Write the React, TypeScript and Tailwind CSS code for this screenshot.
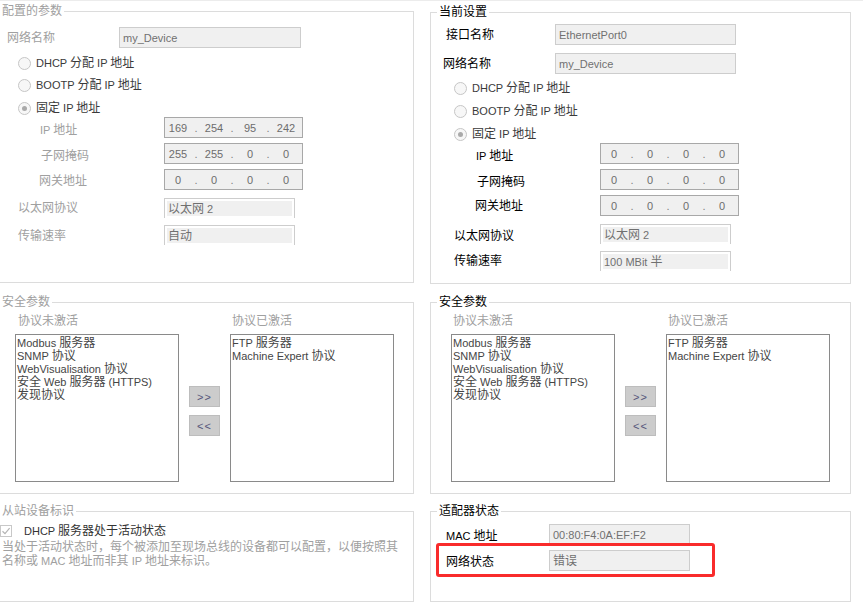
import type { ReactNode } from "react";

const CJK = /([\u2E80-\u9FFF\uFF00-\uFFEF]+)/;

// CJK runs at 12px, latin runs at 11px (like the original Tahoma / SimSun mix)
function Mixed({ s }: { s: string }) {
  return (
    <span>
      {s.split(CJK).map((p, i) =>
        p === "" ? null : CJK.test(p) ? (
          <span key={i} className="text-[12px]">
            {p}
          </span>
        ) : (
          <span key={i} className="text-[11px]">
            {p}
          </span>
        )
      )}
    </span>
  );
}

function Group({
  title,
  dim,
  className,
  children,
}: {
  title: string;
  dim?: boolean;
  className: string;
  children: ReactNode;
}) {
  return (
    <fieldset className={`border border-[#dcdcdc] ${className}`}>
      <legend
        className={`px-[2px] leading-[14px] text-[12px] ${dim ? "ml-0 text-[#a0a0a0]" : "ml-[6px] text-black"}`}
      >
        {title}
      </legend>
      {children}
    </fieldset>
  );
}

function Field({ w, text }: { w: string; text: string }) {
  return (
    <div
      className={`${w} h-[21px] border border-[#cdcdcd] bg-[#f0f0f0] flex items-center pl-[3px] text-[#707070] whitespace-nowrap`}
    >
      <Mixed s={text} />
    </div>
  );
}

function IpField({ parts }: { parts: string[] }) {
  return (
    <div className="w-[139px] h-[21px] border border-[#a8a8a8] bg-[#f0f0f0] flex items-center pl-[1px] text-[11px] text-[#6d6d6d]">
      {parts.map((p, i) => (
        <div key={i} className="flex">
          {i > 0 && <span className="w-[12px] text-center text-[#808080]">.</span>}
          <span className="w-[24px] text-center">{p}</span>
        </div>
      ))}
    </div>
  );
}

function Combo({ text }: { text: string }) {
  return (
    <div className="w-[131px] h-[20px] border-t border-x border-[#cdcdcd] px-[2px] pt-[2px]">
      <div className="h-[15px] bg-[#f0f0f0] flex items-center pl-[1px] text-[#707070] whitespace-nowrap">
        <Mixed s={text} />
      </div>
    </div>
  );
}

function Radio({ label, checked, className }: { label: string; checked?: boolean; className: string }) {
  return (
    <div className={`flex items-center h-[16px] ${className}`}>
      <span className="w-[13px] h-[13px] rounded-full border border-[#c6c6c6] bg-[#f7f7f7] flex items-center justify-center">
        {checked && <span className="w-[5px] h-[5px] rounded-full bg-[#aaaaaa]" />}
      </span>
      <span className="ml-[5px] text-[#3a3a3a] whitespace-nowrap">
        <Mixed s={label} />
      </span>
    </div>
  );
}

function ListBox({ items, className }: { items: string[]; className: string }) {
  return (
    <div
      className={`w-[164px] h-[148px] border border-[#8a8a8a] bg-white pt-[2px] px-[1px] leading-[13px] text-[#454545] ${className}`}
    >
      {items.map((it) => (
        <div key={it} className="whitespace-nowrap">
          <Mixed s={it} />
        </div>
      ))}
    </div>
  );
}

function Btn({ children }: { children: ReactNode }) {
  return (
    <div className="w-[31px] h-[21px] bg-[#cccccc] border border-[#bdbdbd] flex items-center justify-center text-[11px] tracking-[1px] text-[#55557a]">
      {children}
    </div>
  );
}

const inactive = ["Modbus 服务器", "SNMP 协议", "WebVisualisation 协议", "安全 Web 服务器 (HTTPS)", "发现协议"];
const active = ["FTP 服务器", "Machine Expert 协议"];

function Security({ dim }: { dim?: boolean }) {
  return (
    <div className={`flex mt-[6px] ${dim ? "pl-[15px]" : "pl-[20px]"}`}>
      <div className="flex flex-col">
        <span className={`leading-[13px] text-[#a0a0a0] ${dim ? "pl-[3px]" : "pl-[2px]"}`}>协议未激活</span>
        <ListBox className="mt-[6px]" items={inactive} />
      </div>
      <div className="w-[51px] flex flex-col items-center pt-[71px] gap-[8px]">
        <Btn>&gt;&gt;</Btn>
        <Btn>&lt;&lt;</Btn>
      </div>
      <div className="flex flex-col">
        <span className="leading-[13px] text-[#a0a0a0] pl-[2px]">协议已激活</span>
        <ListBox className="mt-[6px]" items={active} />
      </div>
    </div>
  );
}

export default function App() {
  return (
    <div className="w-[863px] h-[610px] overflow-hidden bg-white border-t border-[#ececec] pt-[3px] text-[12px] leading-[14px] font-['Liberation_Sans','Noto_Sans_CJK_SC',sans-serif]">
      {/* top row */}
      <div className="flex gap-4 items-start">
        <Group title="配置的参数" dim className="w-[414px] h-[279px] border-l-0">
          <div className="mt-[9px] flex items-center h-[21px]">
            <span className="w-[119px] pl-[7px] text-[#a0a0a0]">网络名称</span>
            <Field w="w-[182px]" text="my_Device" />
          </div>
          <Radio className="mt-[7px] pl-[18px]" label="DHCP 分配 IP 地址" />
          <Radio className="mt-[6px] pl-[18px]" label="BOOTP 分配 IP 地址" />
          <Radio className="mt-[7px] pl-[18px]" label="固定 IP 地址" checked />
          <div className="mt-[1px] flex items-center h-[21px]">
            <span className="w-[164px] pl-[40px] pt-[5px] text-[#a0a0a0]">
              <Mixed s="IP 地址" />
            </span>
            <IpField parts={["169", "254", "95", "242"]} />
          </div>
          <div className="mt-[5px] flex items-center h-[21px]">
            <span className="w-[164px] pl-[41px] pt-[5px] text-[#a0a0a0]">子网掩码</span>
            <IpField parts={["255", "255", "0", "0"]} />
          </div>
          <div className="mt-[5px] flex items-center h-[21px]">
            <span className="w-[164px] pl-[39px] pt-[3px] text-[#a0a0a0]">网关地址</span>
            <IpField parts={["0", "0", "0", "0"]} />
          </div>
          <div className="mt-[8px] flex items-center h-[20px]">
            <span className="w-[164px] pl-[18px] text-[#a0a0a0]">以太网协议</span>
            <Combo text="以太网 2" />
          </div>
          <div className="mt-[7px] flex items-center h-[20px]">
            <span className="w-[164px] pl-[18px] pt-[2px] text-[#a0a0a0]">传输速率</span>
            <Combo text="自动" />
          </div>
        </Group>

        <Group title="当前设置" className="w-[421px] h-[279px] mt-[1px]">
          <div className="mt-[5px] flex items-center h-[21px]">
            <span className="w-[124px] pl-[15px] text-black">接口名称</span>
            <Field w="w-[181px]" text="EthernetPort0" />
          </div>
          <div className="mt-[8px] flex items-center h-[21px]">
            <span className="w-[124px] pl-[12px] text-black">网络名称</span>
            <Field w="w-[181px]" text="my_Device" />
          </div>
          <Radio className="mt-[6px] pl-[23px]" label="DHCP 分配 IP 地址" />
          <Radio className="mt-[7px] pl-[23px]" label="BOOTP 分配 IP 地址" />
          <Radio className="mt-[7px] pl-[23px]" label="固定 IP 地址" checked />
          <div className="mt-[1px] flex items-center h-[21px]">
            <span className="w-[169px] pl-[45px] pt-[5px] text-black">
              <Mixed s="IP 地址" />
            </span>
            <IpField parts={["0", "0", "0", "0"]} />
          </div>
          <div className="mt-[5px] flex items-center h-[21px]">
            <span className="w-[169px] pl-[46px] pt-[5px] text-black">子网掩码</span>
            <IpField parts={["0", "0", "0", "0"]} />
          </div>
          <div className="mt-[5px] flex items-center h-[21px]">
            <span className="w-[169px] pl-[44px] text-black">网关地址</span>
            <IpField parts={["0", "0", "0", "0"]} />
          </div>
          <div className="mt-[8px] flex items-center h-[20px]">
            <span className="w-[169px] pl-[23px] pt-[3px] text-black">以太网协议</span>
            <Combo text="以太网 2" />
          </div>
          <div className="mt-[7px] flex items-center h-[20px]">
            <span className="w-[169px] pl-[23px] text-black">传输速率</span>
            <Combo text="100 MBit 半" />
          </div>
        </Group>
      </div>

      {/* security row */}
      <div className="flex gap-4 items-start mt-[11px]">
        <Group title="安全参数" dim className="w-[414px] h-[199px] border-l-0">
          <Security dim />
        </Group>
        <Group title="安全参数" className="w-[421px] h-[199px]">
          <Security />
        </Group>
      </div>

      {/* bottom row */}
      <div className="flex gap-4 items-start mt-[10px]">
        <Group title="从站设备标识" dim className="w-[414px] h-[98px] border-l-0">
          <div className="mt-[6px] flex items-center h-[14px]">
            <span className="w-[12px] h-[12px] border border-[#c8c8c8] bg-white flex items-center justify-center">
              <svg width="10" height="10" viewBox="0 0 10 10">
                <path d="M1.5 5.2 L4 7.6 L8.6 2.2" fill="none" stroke="#b4b4b4" strokeWidth="1.2" />
              </svg>
            </span>
            <span className="ml-[12px] text-[#333]">
              <Mixed s="DHCP 服务器处于活动状态" />
            </span>
          </div>
          <p className="mt-[2px] w-[402px] pl-[2px] leading-[14px] text-[#a0a0a0]">
            <Mixed s="当处于活动状态时，每个被添加至现场总线的设备都可以配置，以便按照其名称或 MAC 地址而非其 IP 地址来标识。" />
          </p>
        </Group>

        <Group title="适配器状态" className="w-[421px] h-[98px]">
          <div className="mt-[6px] flex items-center h-[21px]">
            <span className="w-[118px] pl-[15px] pt-[3px] text-black">
              <Mixed s="MAC 地址" />
            </span>
            <Field w="w-[141px]" text="00:80:F4:0A:EF:F2" />
          </div>
          <div className="relative mt-[5px] flex items-center h-[21px]">
            <span className="w-[118px] pl-[15px] pt-[3px] text-black">网络状态</span>
            <Field w="w-[141px]" text="错误" />
            <div className="absolute left-[5px] top-[-7px] w-[279px] h-[34px] border-[3px] border-[#f92b2b] rounded-[3px]" />
          </div>
        </Group>
      </div>
    </div>
  );
}
